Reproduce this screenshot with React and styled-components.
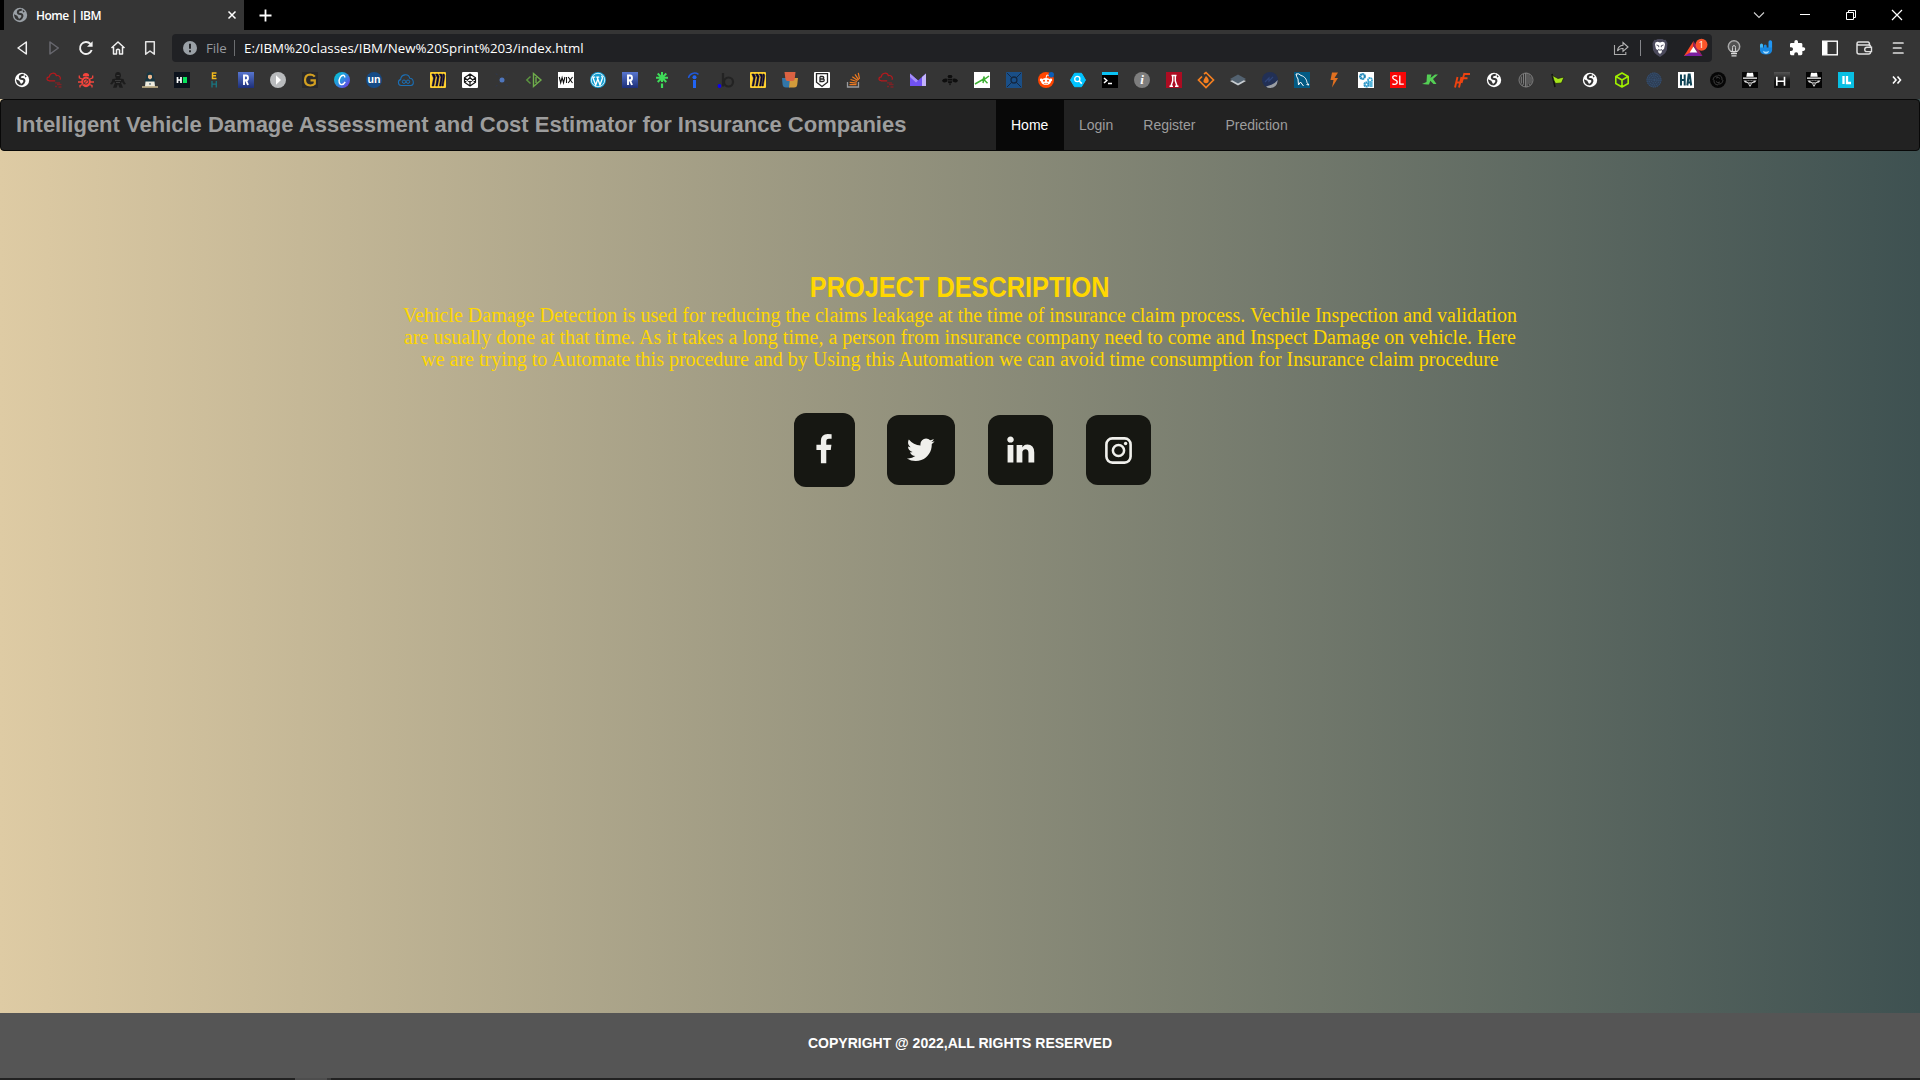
import React from "react";
import styled, { createGlobalStyle } from "styled-components";

const GlobalStyle = createGlobalStyle`
  * { box-sizing: border-box; }
  html, body { margin: 0; padding: 0; background: #000; overflow: hidden; }
  svg { display: block; flex: none; overflow: visible; }
`;

const ui = `"Open Sans", "Noto Sans", sans-serif`;
const arial = `"Liberation Sans", Arial, sans-serif`;

const Screen = styled.div`
  width: 1920px;
  height: 1080px;
  display: flex;
  flex-direction: column;
  overflow: hidden;
`;

/* ---------- browser chrome ---------- */
const TabStrip = styled.div`
  height: 30px;
  background: #000;
  display: flex;
  align-items: center;
  padding-left: 4px;
`;
const Tab = styled.div`
  width: 240px;
  height: 30px;
  background: #353535;
  display: flex;
  align-items: center;
  padding: 0 7px 0 8px;
  color: #fff;
  font: 600 12px ${ui};
`;
const TabTitle = styled.span`
  flex: 1;
  padding-left: 8px;
  letter-spacing: -0.52px;
`;
const NewTab = styled.div`
  padding-left: 14px;
  flex: 1;
`;
const WindowControls = styled.div`
  display: flex;
`;
const WindowButton = styled.div`
  width: 46px;
  display: flex;
  justify-content: center;
`;

const Toolbar = styled.div`
  height: 35px;
  background: #353535;
  display: flex;
  align-items: center;
  padding: 1px 6px 0;
`;
const ToolButton = styled.div`
  width: ${(p) => p.$w || 32}px;
  display: flex;
  justify-content: center;
`;
const AddressBar = styled.div`
  width: 1540px;
  height: 28px;
  margin-left: 6px;
  border-radius: 4px;
  background: #202124;
  display: flex;
  align-items: center;
  padding-left: 11px;
  font: 400 13.3px ${ui};
  color: #fff;
`;
const Scheme = styled.span`
  color: #96999e;
  padding-left: 9px;
  width: 37px;
  letter-spacing: -0.1px;
`;
const Divider = styled.span`
  width: 1px;
  height: 16px;
  background: ${(p) => p.$c || "#6b6d70"};
`;
const Address = styled.span`
  flex: 1;
  padding-left: 9px;
  letter-spacing: 0px;
  white-space: nowrap;
`;
const Extensions = styled.div`
  display: flex;
  align-items: center;
  margin-left: 6px;
`;

const Bookmarks = styled.div`
  height: 34px;
  background: #353535;
  display: flex;
  align-items: center;
  padding: 0 0 4px 6px;
`;
const Bookmark = styled.div`
  width: 32px;
  display: flex;
  justify-content: center;
`;
const Overflow = styled.div`
  margin-left: 29px;
`;

/* ---------- page ---------- */
const Page = styled.div`
  height: 979px;
  display: flex;
  flex-direction: column;
  background: linear-gradient(to right, #decba4, #3e5151);
`;
const NavBar = styled.nav`
  height: 52px;
  background: #222;
  border: 1px solid #080808;
  border-radius: 4px;
  display: flex;
  font-family: ${arial};
  color: #9d9d9d;
`;
const Brand = styled.div`
  width: 995px;
  padding: 12px 0 0 15px;
  font-size: 22px;
  line-height: 26px;
  font-weight: 700;
  white-space: nowrap;
`;
const NavLink = styled.a`
  padding: 15px;
  font-size: 14px;
  line-height: 20px;
  min-width: ${(p) => (p.$active ? 68 : 0)}px;
  color: ${(p) => (p.$active ? "#fff" : "#9d9d9d")};
  background: ${(p) => (p.$active ? "#080808" : "transparent")};
`;
const Main = styled.main`
  flex: 1;
  display: flex;
  flex-direction: column;
  align-items: center;
  padding-top: 120px;
  color: gold;
`;
const Title = styled.h1`
  margin: 0;
  font: 700 29px/33px ${arial};
  transform: scaleX(0.873);
  white-space: nowrap;
`;
const Description = styled.p`
  margin: 0;
  font: 400 20px/22px "Liberation Serif", "Times New Roman", serif;
  text-align: center;
  white-space: nowrap;
`;
const Socials = styled.div`
  display: flex;
  align-items: center;
  margin: 43px 0 0 25px;
`;
const Social = styled.a`
  width: ${(p) => p.$w}px;
  height: ${(p) => p.$h}px;
  margin-right: ${(p) => p.$gap || 0}px;
  padding-right: ${(p) => p.$nudge || 0}px;
  border-radius: 12px;
  background: #161712;
  display: flex;
  align-items: center;
  justify-content: center;
`;
const Footer = styled.footer`
  height: 65px;
  background: #555;
  color: #fff;
  display: flex;
  justify-content: center;
  padding-top: 20px;
  font: 700 14px/20px ${arial};
`;
const TaskEdge = styled.div`
  height: 2px;
  background: #222;
  display: flex;
  padding-left: 295px;
`;
const TaskMark = styled.span`
  width: ${(p) => p.$w}px;
  background: ${(p) => p.$c};
`;

/* ---------- icons ---------- */
const Icon = ({ s = 16, w, h, box, children, ...rest }) => (
  <svg width={w || s} height={h || s} viewBox={box || `0 0 ${w || s} ${h || s}`} fill="none" {...rest}>
    {children}
  </svg>
);

const Letter = ({ t, c = "#fff", size = 12, x = 8, y = 12.3, len, serif, bold = true, italic }) => (
  <text
    x={x}
    y={y}
    fill={c}
    fontSize={size}
    fontWeight={bold ? 700 : 400}
    fontStyle={italic ? "italic" : "normal"}
    textAnchor="middle"
    textLength={len}
    lengthAdjust="spacingAndGlyphs"
    fontFamily={serif ? "Liberation Serif, serif" : "Liberation Sans, sans-serif"}
  >
    {t}
  </text>
);

const Globe = ({ c = "#fff", bg = "#353535" }) => (
  <Icon>
    <circle cx="8" cy="8" r="7.2" fill={c} />
    <path d="M9.800 2.800Q5.800 3 5.800 5.200q0 1.600 2.600 1.900 2.200.3 2 2.200-.3 1.900-3.200 3.700" stroke={bg} strokeWidth="2" />
    <path d="m2 7.300 3.300 1.500 1.900 3.400-.8 1.200Q2 12 2 7.300zM10.500 2.600l2.300 2.200-1.700.6z" fill={bg} />
  </Icon>
);
const RedCloud = () => (
  <Icon>
    <path d="M3.200 8.700C.2 8.500.2 5 3.300 4.800 3.600.3 9.400.2 10.300 3.600c3-.6 5 1.800 3.700 4.200M3 8.800h6.200" stroke="#b5191d" strokeWidth="1.2" />
    <path d="M9 10.800h5M11 12.500h4.500M9 14.500h2M12.500 15h3" stroke="#7c2226" strokeWidth="1.3" />
  </Icon>
);
const Bug = () => (
  <Icon>
    <path d="M4.800 4.200a3.200 3.200 0 0 1 6.400 0z" fill="#f5453d" />
    <ellipse cx="8" cy="9.800" rx="4.800" ry="5.400" fill="#f5453d" />
    <path d="M4 7 1.300 5.800V3.500M12 7l2.700-1.200V3.500M4 10H0M12 10h4M4.500 12.500 2 13.500v2M11.500 12.500l2.500 1v2" stroke="#f5453d" strokeWidth="1.300" />
    <circle cx="8" cy="9.600" r="2.600" stroke="#353535" strokeWidth=".9" />
    <path d="m5 12.500 6-6" stroke="#353535" strokeWidth=".9" />
  </Icon>
);
const Ninja = () => (
  <Icon>
    <path d="M8 0c2 0 3 1.500 3 4l-1 2.500 3.500.5 1 3 1.500 2-2 .5-2-2.500-1 1 1 2 1 2.800H9.500L8 12l-1.500 3.800H3l1-2.800 1-2-1-1-2 2.500-2-.5L1.500 10l1-3L6 6.500 5 4c0-2.500 1-4 3-4z" fill="#1c1c1c" />
    <path d="M6.500 3.500h3M5 8.500h6M6 10.500h4" stroke="#454545" strokeWidth=".8" />
  </Icon>
);
const Hacker = () => (
  <Icon>
    <path d="M8 0C5 0 4.300 3 4.300 5.500L3 8v6h10V8l-1.300-2.500C11.700 3 11 0 8 0z" fill="#173642" />
    <path d="M6 3.500Q8 2 10 3.500V6L8 7.500 6 6z" fill="#eeb98e" />
    <path d="M3.500 9.500h9l.5 5H3z" fill="#f0ecdf" />
    <path d="M0 14.300h16v1.400H0z" fill="#d8c594" />
    <circle cx="8" cy="11.900" r=".9" fill="#59717a" />
  </Icon>
);
const Tile = ({ bg, r = 0, children }) => (
  <Icon>
    <rect width="16" height="16" rx={r} fill={bg} />
    {children}
  </Icon>
);
const HackBox = () => (
  <Tile bg="#0c131d">
    <path d="M3.500 5v6M7 5v6M3.500 8H7" stroke="#fff" strokeWidth="1.700" />
    <rect x="9" y="5" width="4" height="6" fill="#08e35c" />
  </Tile>
);
const EH = () => (
  <Icon>
    <path d="M10.500 1H6.500v5.500h4M6.500 3.700h3.500" stroke="#f2b91c" strokeWidth="1.500" />
    <path d="M6 9v6.500M10.300 9v6.500M6 12.200h4.300" stroke="#197782" strokeWidth="1.300" />
  </Icon>
);
const RTile = () => (
  <Icon>
    <defs>
      <linearGradient id="rblue" x1="0" y1="0" x2="0" y2="1">
        <stop stopColor="#5876cf" />
        <stop offset="1" stopColor="#1d2f78" />
      </linearGradient>
    </defs>
    <rect width="16" height="16" fill="url(#rblue)" />
    <path d="M6 13V3.500h2q2 0 2 2.400T8 8.300H6.500M8 8.300 10 13" stroke="#fff" strokeWidth="1.900" />
  </Icon>
);
const Play = () => (
  <Icon>
    <circle cx="8" cy="8" r="8" fill="#b9bbbd" />
    <path d="M6 3.200v9.600L11 8z" fill="#fff" />
  </Icon>
);
const GTile = () => (
  <Tile bg="#29292b">
    <path d="M12.800 4.600Q11.200 2.500 8.300 2.500 3 2.800 3 8t5.300 5.500q3 0 4.500-1.700V8.400H8.500" stroke="#d3a021" strokeWidth="2.200" />
  </Tile>
);
const Canva = () => (
  <Icon>
    <defs>
      <linearGradient id="canva" x1="0" y1="0.100" x2="1" y2="1">
        <stop stopColor="#00c9d2" />
        <stop offset=".5" stopColor="#2f8be0" />
        <stop offset="1" stopColor="#7d2ae8" />
      </linearGradient>
    </defs>
    <circle cx="8" cy="8" r="8" fill="url(#canva)" />
    <path d="M10.800 5.500C11 2.500 8 2.500 6.300 5.200 4.300 8.700 4.900 12.500 7.500 12.600c1.600 0 3-1.300 3.700-2.700" stroke="#fff" strokeWidth="1.400" />
  </Icon>
);
const Un = () => (
  <Icon>
    <circle cx="8" cy="8" r="8" fill="#164b86" />
    <Letter t="un" size={11.500} y={11} len={13} />
  </Icon>
);
const InfinityCloud = () => (
  <Icon>
    <path d="M3 13.500C-.5 13-.2 8 2.600 7.600 3 2 10.500 1 11.800 6.300c4 .2 4.900 6.500 1 7.200z" stroke="#1b6fb5" strokeWidth="1.100" />
    <circle cx="6" cy="9.700" r="1.700" stroke="#1b6fb5" />
    <circle cx="10" cy="9.700" r="1.700" stroke="#1b6fb5" />
  </Icon>
);
const Miro = () => (
  <Tile bg="#ffd02f" r={1}>
    <path d="M1.800 2h2.400l1.300 2.500L3.800 14H2l1.500-8zM5.500 2h2.400l1.300 2.500L7.500 14H5.700l1.500-8.500zM9.300 2h2.300l1.200 2-1.700 10H9.400l1.500-9zM12.700 2h1.400l.7 1.700L13.300 14h-1.500l1.500-9.500z" fill="#0b0833" stroke="#0b0833" strokeWidth=".5" />
  </Tile>
);
const Codepen = () => (
  <Tile bg="#fff" r={1}>
    <path d="m8 2 5.500 3.700v4.600L8 14l-5.500-3.700V5.700zM8 2v3.700M8 14v-3.700M2.500 5.700 8 10.300l5.500-4.600M2.500 10.300 8 5.700l5.500 4.600" stroke="#161616" strokeWidth="1.200" strokeLinejoin="round" />
  </Tile>
);
const Node = () => (
  <Icon>
    <path d="M2 1.500 8 8l6-6.500M2 14.500 8 8l6 6.500" stroke="#2d3852" strokeWidth="1" strokeDasharray="2 3" />
    <circle cx="8" cy="8" r="2.500" fill="#4f76bd" />
  </Icon>
);
const GreenCode = () => (
  <Icon>
    <path d="M4.500 4.500.8 8l3.700 3.500" stroke="#5b9340" strokeWidth="1.500" />
    <path d="M7.500 1.500v13L15 8zM10 5v6" stroke="#6fae4b" strokeWidth="1.400" />
  </Icon>
);
const Wix = () => (
  <Tile bg="#fff">
    <path d="m1.300 5 1.400 5.700L4.100 5.600l1.400 5.100L6.900 5M8.500 5v6M10.200 5l4.300 6M14.500 5l-4.300 6" stroke="#111" strokeWidth="1.100" />
  </Tile>
);
const Wordpress = () => (
  <Icon>
    <circle cx="8" cy="8" r="8" fill="#139ed2" />
    <circle cx="8" cy="8" r="6.700" stroke="#fff" strokeWidth=".8" />
    <path d="m2.800 5.300 2.900 7.700L7.800 7M7.200 5.300 10 13l2.300-6.500q.3-1.500-.8-2.700M2.200 5.200h3M6.300 5.200h3" stroke="#fff" strokeWidth="1.300" />
  </Icon>
);
const Linktree = () => (
  <Icon>
    <path d="M8 0v10M2 5.700h12M3.700 1.500l8.600 8.500M12.300 1.500 3.700 10" stroke="#3fdc59" strokeWidth="2" />
    <path d="M8 11.500V16" stroke="#3fdc59" strokeWidth="2.200" />
  </Icon>
);
const Indeed = () => (
  <Icon>
    <path d="M2.500 6C3.300 1 9 0 12.500 2.300" stroke="#2159d9" strokeWidth="1.500" />
    <circle cx="8.500" cy="5.200" r="2" fill="#2164f3" />
    <path d="M8.500 8v8" stroke="#2164f3" strokeWidth="3" />
  </Icon>
);
const Bdot = () => (
  <Icon>
    <circle cx="1.500" cy="14" r="1.900" fill="#0b00f5" />
    <circle cx="10.500" cy="10" r="4.500" stroke="#232323" strokeWidth="2.200" />
    <path d="M5 1v13.500" stroke="#232323" strokeWidth="2.200" />
  </Icon>
);
const Cups = () => (
  <Icon>
    <path d="M0 6h8v9.500H4Q.8 15.500.5 12z" fill="#3276a8" />
    <path d="M8 6h8l-.8 7q-.4 2.500-3 2.500H7z" fill="#d39b3b" />
    <path d="M2.500 0h11l-.8 7q-.2 2-2.200 2H5.700q-2 0-2.300-2z" fill="#db6242" />
  </Icon>
);
const ShieldB = () => (
  <Tile bg="#fff" r={1}>
    <path d="M2.500 1.700h11v8.600L8 14.500l-5.500-4.200z" stroke="#262626" strokeWidth="1.300" />
    <path d="M6 4.500v5h2.500q1.700 0 1.700-1.300T8.500 7H6M6 4.500h2.300q1.500 0 1.500 1.200T8.300 7" stroke="#262626" strokeWidth="1.300" />
  </Tile>
);
const Stack = () => (
  <Icon>
    <path d="M1.500 10v5h11v-5" stroke="#9a9b9d" strokeWidth="1.300" />
    <path d="M3.500 12.600h7M3.700 10.300l7 .8M4.500 7.500l6.500 2M6.300 4.700l5.500 3.900M9 2.300l3.700 5.500M12.300.8l1.200 6" stroke="#ee7a21" strokeWidth="1.200" />
  </Icon>
);
const Proton = () => (
  <Icon>
    <path d="M0 1.500 8 8.500l8-7V14H0z" fill="#7051f3" />
    <path d="m0 1.500 8 7-2 2L0 5z" fill="#a58df8" />
    <path d="m16 1.500-4 3.500v9h4z" fill="#c2b2fa" />
  </Icon>
);
const Bee = () => (
  <Icon>
    <path d="M0 8.500Q1.500 6 5.300 6.800v2.700Q1 12 0 8.500zm16 0Q14.500 6 10.700 6.800v2.700Q15 12 16 8.500zM6.500 3h3l1 1.500-1 1.500H6.500l-1-1.500zM5.800 6.800h4.400v1.700H5.800zm0 2.500h4.400l-.5 1.600H6.300zm.9 2.300h2.600L8 13.500z" fill="#0e0e0e" />
  </Icon>
);
const KTile = () => (
  <Tile bg="#fff">
    <path d="m1 12 8-4.500 1.300-3L9 11M15 4l-5 3.700 3.500 3.500" stroke="#3daf32" strokeWidth="1.500" />
  </Tile>
);
const BlueBox = () => (
  <Tile bg="#1a4f87" r={1}>
    <circle cx="8" cy="8" r="3" stroke="#142842" strokeWidth="1.300" />
    <path d="m1 1 5 5M15 1l-5 5M1 15l5-5M15 15l-5-5" stroke="#142842" strokeWidth="1" />
  </Tile>
);
const Reddit = () => (
  <Icon>
    <circle cx="8" cy="8" r="8" fill="#ff4500" />
    <ellipse cx="8" cy="9.500" rx="5" ry="3.500" fill="#fff" />
    <circle cx="3.200" cy="8" r="1.400" fill="#fff" />
    <circle cx="12.800" cy="8" r="1.400" fill="#fff" />
    <circle cx="6" cy="8.800" r="1" fill="#ff4500" />
    <circle cx="10" cy="8.800" r="1" fill="#ff4500" />
    <path d="M6 11.300q2 1.200 4 0" stroke="#ff6a35" strokeWidth=".8" />
    <path d="m8 6 .8-3 2.500.5" stroke="#fff" strokeWidth=".9" />
    <circle cx="13.300" cy="2.700" r="2.700" fill="#0b5eb8" />
  </Icon>
);
const SearchHex = () => (
  <Icon>
    <path d="M4.500 1.300h7L15.500 8l-4 6.700h-7L.5 8z" fill="#00c3ff" stroke="#00c3ff" strokeLinejoin="round" />
    <circle cx="7.300" cy="7" r="2.600" stroke="#fff" strokeWidth="1.300" />
    <path d="m9.200 9 2.600 2.600" stroke="#fff" strokeWidth="1.500" />
  </Icon>
);
const Terminal = () => (
  <Tile bg="#000">
    <path d="M0 0h16v3H0z" fill="#0bc3f5" />
    <path d="m2 6 2.800 2.500L2 11M6 11.500h4" stroke="#fff" strokeWidth="1.500" />
  </Tile>
);
const Info = () => (
  <Icon>
    <circle cx="8" cy="8" r="8" fill="#7d7d7d" />
    <Letter t="i" size={13} y={12.300} serif italic />
  </Icon>
);
const RedA = () => (
  <Tile bg="#ad0c22">
    <path d="M6.700 3.500v5.500L5 14M9.300 3.500v5.500l1.700 5M5.500 3.500h5M3.500 14.300h3.500M9 14.300h3.500" stroke="#fff" strokeWidth="1.500" />
  </Tile>
);
const Diamond = () => (
  <Icon>
    <path d="m6 2 2-1.500L15.500 8 8 15.500.5 8 4 4.500" stroke="#f57f20" strokeWidth="1.700" />
    <path d="M8 4q3.500 3 2.500 6Q8 12.500 5.500 10 5 8 8 4z" fill="#f57f20" />
  </Icon>
);
const Layers = () => (
  <Icon>
    <path d="m0 9 8 4.500L16 9l-8-3z" fill="#c9ced2" />
    <path d="m0 7 8 4.500L16 7 8 2.500z" fill="#536270" />
  </Icon>
);
const Orb = () => (
  <Icon>
    <circle cx="8" cy="8" r="8" fill="#223055" />
    <path d="M4 14.500Q12 13 15.800 8 15 16 8 16q-2.500 0-4-1.500z" fill="#9c9fa3" />
    <path d="m3 10 4-4v3l4-4" stroke="#2f4478" strokeWidth="1.200" />
  </Icon>
);
const Mysql = () => (
  <Tile bg="#035a83">
    <path d="M2 2q3-1 5 1.500c4 1 5.500 4 6 7l2 2.500-2.500-.5M2 2q.5 3 2 5l.5 6 2-3 3 4" stroke="#fff" strokeWidth="1" />
  </Tile>
);
const Bolt = () => (
  <Icon>
    <path d="M6 .5 4.500 8h3L6 15.500 12 6H8.500L12 .5z" fill="#e07020" />
  </Icon>
);
const Gears = () => (
  <Tile bg="#fff">
    <circle cx="4.500" cy="4.500" r="2.300" stroke="#1f87b8" strokeWidth="2.200" strokeDasharray="1.600 .3" />
    <circle cx="12" cy="8" r="2" stroke="#3aa6d2" strokeWidth="1.800" strokeDasharray="1.500 .3" />
    <circle cx="8.500" cy="12.500" r="2" stroke="#2895c7" strokeWidth="2.200" strokeDasharray="1.600 .3" />
    <path d="M13 10v5" stroke="#54b4da" strokeWidth="3.200" />
  </Tile>
);
const SL = () => (
  <Tile bg="#f80606">
    <path d="M7.200 4.300Q4.800 3 3.200 4.200 2 6 4 7.300l2 1Q8 9.500 6.800 11.500 5 13 2.300 11.800M9.800 3.500v8.700h4" stroke="#fff" strokeWidth="1.300" />
  </Tile>
);
const JK = () => (
  <Icon>
    <path d="M5 2.500h4.500l-1 3.500L13 2.500h3L11 7l3.500 5h-3L8.300 8.800 7 12.500H5L0 12l4.500-2z" fill="#54cf55" />
  </Icon>
);
const HF = () => (
  <Icon>
    <path d="M3.500 5 1 15.500M7.500 5 5 15.500M2 10.500h5M10.500 1 7.500 11M10.500 2H16M9 6.300h4.500" stroke="#ee4310" strokeWidth="1.900" />
  </Icon>
);
const Rings = () => (
  <Icon>
    <circle cx="8" cy="8" r="7" stroke="#858585" strokeWidth=".9" />
    <path d="M3.300 4.500v7M5.500 2v9.500q0 1.500-1.500 2M7.500 1v14M9 1v14M11 2v9.500q0 1.500 1.500 1.500M13 4.500v7" stroke="#858585" strokeWidth=".9" />
  </Icon>
);
const Flag = () => (
  <Icon>
    <path d="m2 2 3 13" stroke="#111" strokeWidth="1.500" />
    <path d="m2.500 3.500 5.500 3L14 5l-2.500 6-6 .5-1.500-3z" fill="#a6e51a" stroke="#1b1f12" strokeWidth=".7" />
  </Icon>
);
const Cube = () => (
  <Icon>
    <path d="m8 1 6.200 3.500v7L8 15l-6.200-3.500v-7zM2 4.500 8 8l6-3.500M8 8v7" stroke="#9fef00" strokeWidth="1.600" strokeLinejoin="round" />
  </Icon>
);
const Dotted = () => (
  <Icon>
    <circle cx="8" cy="8" r="7.500" fill="#2e3f56" />
    {[7, 5, 3, 1].map((r) => (
      <circle key={r} cx="8" cy="8" r={r} stroke="#3a5578" strokeWidth="1" strokeDasharray="1.300 .9" />
    ))}
  </Icon>
);
const HA = () => (
  <Tile bg="#fff">
    <path d="M3 2.500v11M6.700 2.500v11M3 8h3.700M9.300 13.500l1.400-11h1l1.500 11M10 10.500h2.500" stroke="#104456" strokeWidth="2" />
  </Tile>
);
const Swirl = () => (
  <Icon>
    <circle cx="8" cy="8" r="8" fill="#060606" />
    <path d="M8 3q4.500.5 4 5M13 8q-.5 4.500-5 4M8 13q-4.500-.5-4-5M3 8q.5-4.500 5-4M6 6q2.500-1.500 4 .5M10 10q-2.500 1.500-4-.5" stroke="#3c3c3c" strokeWidth="1" />
  </Icon>
);
const Spy = () => (
  <Tile bg="#050505">
    <path d="M5 .8h2.500l.5.500.5-.5H11l.7 4H4.300zM1 5.500h14v1.300H1z" fill="#fff" />
    <path d="M1.500 8.500h13l-1.500 2-2.500.5L8 15l-2.500-4L3 10.500z" fill="#dedede" />
    <path d="M4.500 8.700 7 10l1-1 1 1 2.500-1.300M6.500 12h3" stroke="#050505" strokeWidth="1.100" />
  </Tile>
);
const HTile = () => (
  <Icon>
    <defs>
      <linearGradient id="hgrey" x1="0" y1="0" x2="0" y2="1">
        <stop stopColor="#555" />
        <stop offset=".6" stopColor="#111" />
      </linearGradient>
    </defs>
    <rect width="16" height="16" fill="url(#hgrey)" />
    <path d="M2.800 4.700v9M10.500 4.700v9M2.800 9.200h7.700" stroke="#fff" strokeWidth="1.600" />
  </Icon>
);
const IL = () => (
  <Tile bg="#08bfe3">
    <path d="M5.500 4v8M9 4v7h4" stroke="#fff" strokeWidth="2.300" />
  </Tile>
);

const bookmarks = [
  Globe, RedCloud, Bug, Ninja, Hacker, HackBox, EH, RTile, Play, GTile,
  Canva, Un, InfinityCloud, Miro, Codepen, Node, GreenCode, Wix, Wordpress, RTile,
  Linktree, Indeed, Bdot, Miro, Cups, ShieldB, Stack, RedCloud, Proton, Bee,
  KTile, BlueBox, Reddit, SearchHex, Terminal, Info, RedA, Diamond, Layers, Orb,
  Mysql, Bolt, Gears, SL, JK, HF, Globe, Rings, Flag, Globe,
  Cube, Dotted, HA, Swirl, Spy, HTile, Spy, IL,
];

const Chrome = () => (
  <>
    <TabStrip>
      <Tab>
        <Globe c="#9aa0a6" />
        <TabTitle>Home | IBM</TabTitle>
        <Icon s={10}>
          <path d="m1.500 1.500 7 7M8.500 1.500l-7 7" stroke="#fff" strokeWidth="1.500" />
        </Icon>
      </Tab>
      <NewTab>
        <Icon s={15}>
          <path d="M7.500 1.500v12M1.500 7.500h12" stroke="#fff" strokeWidth="1.800" />
        </Icon>
      </NewTab>
      <WindowControls>
        <WindowButton>
          <Icon s={12}><path d="m1 3.500 5 5 5-5" stroke="#d0d0d0" strokeWidth="1.100" /></Icon>
        </WindowButton>
        <WindowButton>
          <Icon s={12}><path d="M1 5.500h10" stroke="#fff" /></Icon>
        </WindowButton>
        <WindowButton>
          <Icon s={12}>
            <path d="M1.500 3.500h7v7h-7zM3.500 3.500v-2h7v7h-2" stroke="#fff" strokeWidth="1" />
          </Icon>
        </WindowButton>
        <WindowButton>
          <Icon s={12}><path d="m1 1 10 10M11 1 1 11" stroke="#fff" strokeWidth="1.200" /></Icon>
        </WindowButton>
      </WindowControls>
    </TabStrip>

    <Toolbar>
      <ToolButton>
        <Icon><path d="M12.300 2v12L4 8z" stroke="#f1f1f1" strokeWidth="1.500" strokeLinejoin="round" /></Icon>
      </ToolButton>
      <ToolButton>
        <Icon><path d="M4 2v12l8.300-6z" stroke="#68686f" strokeWidth="1.500" strokeLinejoin="round" /></Icon>
      </ToolButton>
      <ToolButton>
        <Icon>
          <path d="M12.500 4A6 6 0 1 0 13.700 10" stroke="#f1f1f1" strokeWidth="1.900" />
          <path d="M14.600 1.200v5.500H9z" fill="#f1f1f1" />
        </Icon>
      </ToolButton>
      <ToolButton>
        <Icon>
          <path d="m1.500 8 6.500-6 6.500 6M3.500 7v7h3v-4q1.500-1.500 3 0v4h3V7" stroke="#f1f1f1" strokeWidth="1.500" strokeLinejoin="round" />
        </Icon>
      </ToolButton>
      <ToolButton>
        <Icon><path d="M3.700 1.800h8.600v12.400L8 11l-4.300 3.200z" stroke="#e4e4e4" strokeWidth="1.500" strokeLinejoin="round" /></Icon>
      </ToolButton>
      <AddressBar>
        <Icon s={14}>
          <circle cx="7" cy="7" r="7" fill="#9aa0a6" />
          <path d="M7 2.800v5M7 9.300v2" stroke="#202124" strokeWidth="1.900" />
        </Icon>
        <Scheme>File</Scheme>
        <Divider />
        <Address>E:/IBM%20classes/IBM/New%20Sprint%203/index.html</Address>
        <ToolButton $w={38}>
          <Icon>
            <path d="M1.500 5v9.500h11.300V12" stroke="#aaa" strokeWidth="1.100" />
            <path d="M4.500 11Q5 5.500 10 5.300V2.500L15 7l-5 4.300V8.500Q6.500 8 4.500 11z" stroke="#b9b9b9" strokeWidth="1.100" />
          </Icon>
        </ToolButton>
        <Divider $c="#85868a" />
        <ToolButton $w={38}>
          <Icon w={16} h={18}>
            <path d="m4 1 1.500-1h5L12 1l1.500-.2L15.500 4l-.6 7q-1 3-4 5L8 18l-3-2q-3-2-4-5L.5 4l2-3.200z" fill="#4b4a5c" />
            <path d="m3.500 3.500 2-.7L8 3.500l2.500-.7 2 .7.5 2-1 4.500-2.500 1.500.5 1.500-2 2-2-2 .5-1.500L4 10 3 5.500z" fill="#fff" />
            <path d="m4.500 6 2.200.7v1.500M11.500 6l-2.200.7v1.500M6 10.500l2 .7 2-.7" stroke="#4b4a5c" strokeWidth=".9" />
          </Icon>
        </ToolButton>
        <ToolButton $w={33}>
          <Icon w={24} h={18} box="0 0 24 18">
            <path d="M9.500 2 0 17h9.500z" fill="#ff4724" />
            <path d="M0 17h18.500l-4.600-4H7z" fill="#7b1fa2" />
            <path d="M9.500 2 18.500 17l-5-3.500-4-6.500z" fill="#9e1f63" />
            <path d="m9.500 7.500 3.800 6h-7.600z" fill="#fff" />
            <circle cx="17.500" cy="5.700" r="6" fill="#fb542b" />
            <text x="17.300" y="9" fontSize="9" textAnchor="middle" fill="#fff" fontFamily="Open Sans, sans-serif">1</text>
          </Icon>
        </ToolButton>
      </AddressBar>
      <Extensions>
        <ToolButton>
          <Icon w={16} h={17}>
            <circle cx="8" cy="6.500" r="5.700" fill="#525252" stroke="#a9a9a9" strokeWidth="1.500" />
            <path d="M6.500 12V7.500q0-2 1.500-2t1.500 2V12" stroke="#ccc" strokeWidth="1" />
            <path d="M4.500 11.500h7M5 13.700h6M5.500 15.800h5" stroke="#dadada" strokeWidth="1.200" />
          </Icon>
        </ToolButton>
        <ToolButton>
          <Icon>
            <path d="M3.500 5v3" stroke="#41b7f5" strokeWidth="3" strokeLinecap="round" />
            <path d="M7.200 6v3" stroke="#168de9" strokeWidth="3" strokeLinecap="round" />
            <path d="M12.300 2v8" stroke="#2196f3" strokeWidth="3.600" strokeLinecap="round" />
            <path d="M2 7.500h12v3q-.5 4-6 4t-6-4z" fill="#1787e0" />
            <path d="M5 10.800q3 2 6 0-.5 3-3 3t-3-3z" fill="#a7dcff" />
          </Icon>
        </ToolButton>
        <ToolButton>
          <Icon box="2 1 22 22">
            <path fill="#fff" d="M20.500 11H19V7a2 2 0 0 0-2-2h-4V3.500a2.500 2.500 0 0 0-5 0V5H4a2 2 0 0 0-2 2v3.800h1.500a2.700 2.700 0 0 1 0 5.400H2V20a2 2 0 0 0 2 2h3.800v-1.500a2.700 2.700 0 0 1 5.400 0V22H17a2 2 0 0 0 2-2v-4h1.500a2.500 2.500 0 0 0 0-5z" />
          </Icon>
        </ToolButton>
        <ToolButton>
          <Icon>
            <rect x=".7" y="1.200" width="14.600" height="13.600" stroke="#fff" strokeWidth="1.400" />
            <path d="M1 1.500h4.500v13H1z" fill="#fff" />
          </Icon>
        </ToolButton>
        <ToolButton $w={36}>
          <Icon>
            <path d="M1 3.500v8.500q0 2 2 2h9.500q2 0 2-2V6.500q0-1.500-2-1.500H2.500Q1 5 1 3.500T2.500 2H12q1.500 0 1.500 3" stroke="#dedede" strokeWidth="1.500" />
            <path d="M15.500 7.200H11q-2.300 0-2.300 2.200t2.300 2.200h4.500z" fill="#353535" stroke="#dedede" strokeWidth="1.400" />
          </Icon>
        </ToolButton>
        <ToolButton>
          <Icon>
            <path d="M3.500 3h9.500M3.500 8H11M3.500 13H13" stroke="#dedede" strokeWidth="1.700" strokeLinecap="round" />
          </Icon>
        </ToolButton>
      </Extensions>
    </Toolbar>

    <Bookmarks>
      {bookmarks.map((Mark, i) => (
        <Bookmark key={i}>
          <Mark />
        </Bookmark>
      ))}
      <Overflow>
        <Icon w={12} h={10}>
          <path d="m2 1.500 3 3.500-3 3.500M6.500 1.500l3 3.500-3 3.500" stroke="#fff" strokeWidth="1.600" />
        </Icon>
      </Overflow>
    </Bookmarks>
  </>
);

const Glyph = ({ d }) => (
  <Icon s={31.500} box="0 0 1792 1792">
    <path fill="#f0f0ec" d={d} />
  </Icon>
);

const facebook =
  "M1343 12v264h-157q-86 0-116 36t-30 108v189h293l-39 296h-254v759h-306v-759h-255v-296h255v-218q0-186 104-288.500t277-102.500q147 0 228 12z";
const twitter =
  "M1684 408q-67 98-162 167 1 14 1 42 0 130-38 259.500t-115.500 248.500-184.500 210.500-258 146-323 54.500q-271 0-496-145 35 4 78 4 225 0 401-138-105-2-188-64.500t-114-159.500q33 5 61 5 43 0 85-11-112-23-185.500-111.500t-73.500-205.500v-4q68 38 146 41-66-44-105-115t-39-154q0-88 44-163 121 149 294.500 238.500t371.500 99.500q-8-38-8-74 0-134 94.500-228.500t228.500-94.500q140 0 236 102 109-21 205-78-37 115-142 178 93-10 186-50z";
const linkedin =
  "M477 625v991h-330v-991h330zm21-306q1 73-50.500 122t-135.500 49h-2q-82 0-132-49t-50-122q0-74 51.500-122.500t134.500-48.500 133 48.500 51 122.500zm1166 729v568h-329v-530q0-105-40.500-164.500t-126.500-59.500q-63 0-105.500 34.500t-63.500 85.500q-11 30-11 81v553h-329q2-399 2-647t-1-296l-1-48h329v144h-2q20-32 41-56t56.500-52 87-43.500 114.500-15.500q171 0 275 113.500t104 332.500z";

export default function App() {
  return (
    <Screen>
      <GlobalStyle />
      <Chrome />
      <Page>
        <NavBar>
          <Brand>Intelligent Vehicle Damage Assessment and Cost Estimator for Insurance Companies</Brand>
          <NavLink $active>Home</NavLink>
          <NavLink>Login</NavLink>
          <NavLink>Register</NavLink>
          <NavLink>Prediction</NavLink>
        </NavBar>
        <Main>
          <Title>PROJECT DESCRIPTION</Title>
          <Description>
            Vehicle Damage Detection is used for reducing the claims leakage at the time of insurance claim process. Vechile Inspection and validation
            <br />
            are usually done at that time. As it takes a long time, a person from insurance company need to come and Inspect Damage on vehicle. Here
            <br />
            we are trying to Automate this procedure and by Using this Automation we can avoid time consumption for Insurance claim procedure
          </Description>
          <Socials>
            <Social $w={61} $h={74} $gap={32} $nudge={2}><Glyph d={facebook} /></Social>
            <Social $w={68} $h={70} $gap={33}><Glyph d={twitter} /></Social>
            <Social $w={65} $h={70} $gap={33}><Glyph d={linkedin} /></Social>
            <Social $w={65} $h={70}>
              <Icon s={27}>
                <rect x="1.400" y="1.400" width="24.200" height="24.200" rx="6" stroke="#f0f0ec" strokeWidth="2.600" />
                <circle cx="13.500" cy="13.500" r="5.600" stroke="#f0f0ec" strokeWidth="2.500" />
                <circle cx="20.600" cy="6.500" r="1.700" fill="#f0f0ec" />
              </Icon>
            </Social>
          </Socials>
        </Main>
        <Footer>COPYRIGHT @ 2022,ALL RIGHTS RESERVED</Footer>
      </Page>
      <TaskEdge>
        <TaskMark $w={32} $c="#4d4d4d" />
        <TaskMark $w={4} $c="#383838" />
      </TaskEdge>
    </Screen>
  );
}
